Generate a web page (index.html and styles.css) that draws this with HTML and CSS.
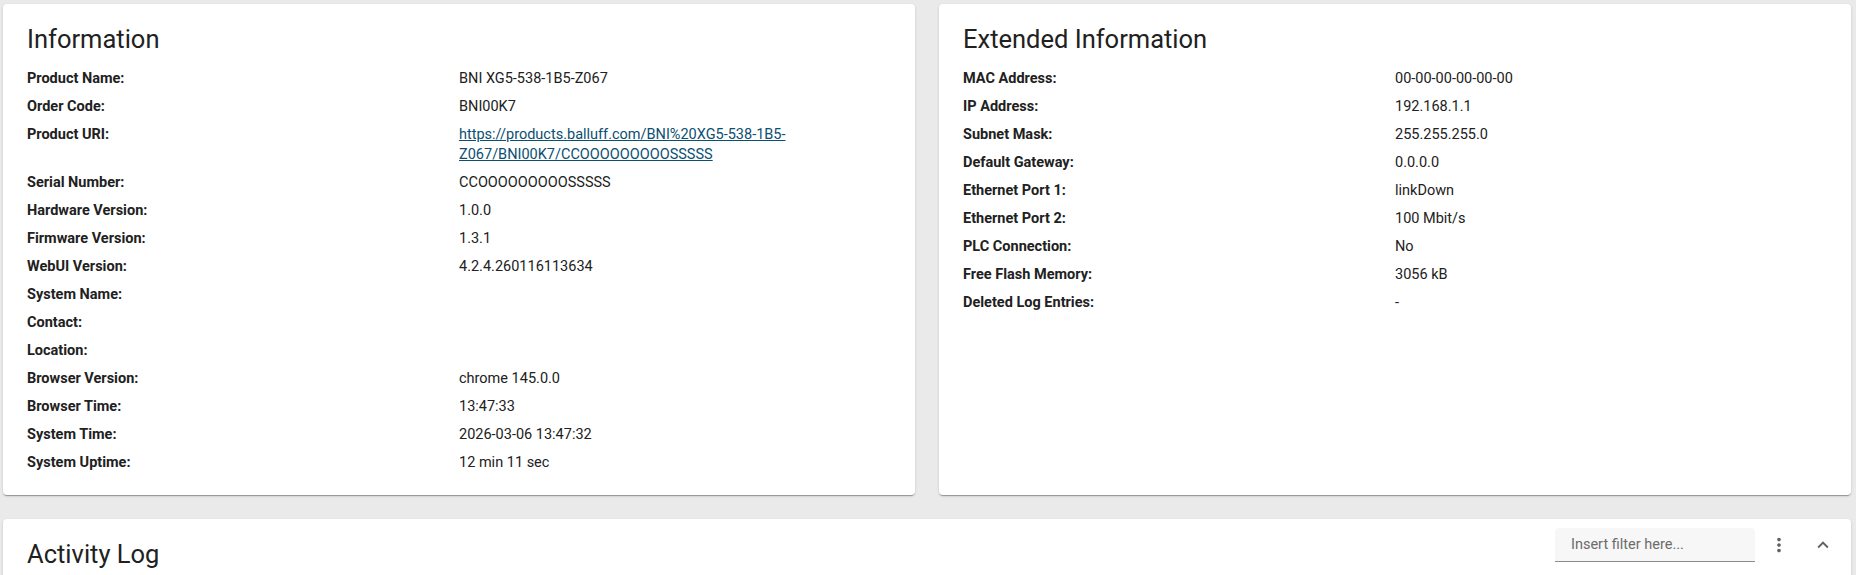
FILE: index.html
```html
<!DOCTYPE html>
<html lang="en">
<head>
    <meta charset="UTF-8">
    <meta name="viewport" content="width=device-width, initial-scale=1.0">
    <title>Device Overview</title>
    <link rel="stylesheet" href="styles.css">
</head>
<body>
    <main class="page">
        <!-- Fila superior: datos del equipo y red -->
        <div class="card-row">
            <section class="card">
                <h2 class="card-title">Information</h2>
                <dl class="info-list">
                    <dt>Product Name:</dt><dd>BNI XG5-538-1B5-Z067</dd>
                    <dt>Order Code:</dt><dd>BNI00K7</dd>
                    <dt>Product URI:</dt>
                    <dd><a href="#">https://products.balluff.com/BNI%20XG5-538-1B5-<br>Z067/BNI00K7/CCOOOOOOOOOSSSSS</a></dd>
                    <dt>Serial Number:</dt><dd>CCOOOOOOOOOSSSSS</dd>
                    <dt>Hardware Version:</dt><dd>1.0.0</dd>
                    <dt>Firmware Version:</dt><dd>1.3.1</dd>
                    <dt>WebUI Version:</dt><dd>4.2.4.260116113634</dd>
                    <dt>System Name:</dt><dd></dd>
                    <dt>Contact:</dt><dd></dd>
                    <dt>Location:</dt><dd></dd>
                    <dt>Browser Version:</dt><dd>chrome 145.0.0</dd>
                    <dt>Browser Time:</dt><dd>13:47:33</dd>
                    <dt>System Time:</dt><dd>2026-03-06 13:47:32</dd>
                    <dt>System Uptime:</dt><dd>12 min 11 sec</dd>
                </dl>
            </section>

            <section class="card">
                <h2 class="card-title">Extended Information</h2>
                <dl class="info-list">
                    <dt>MAC Address:</dt><dd>00-00-00-00-00-00</dd>
                    <dt>IP Address:</dt><dd>192.168.1.1</dd>
                    <dt>Subnet Mask:</dt><dd>255.255.255.0</dd>
                    <dt>Default Gateway:</dt><dd>0.0.0.0</dd>
                    <dt>Ethernet Port 1:</dt><dd>linkDown</dd>
                    <dt>Ethernet Port 2:</dt><dd>100 Mbit/s</dd>
                    <dt>PLC Connection:</dt><dd>No</dd>
                    <dt>Free Flash Memory:</dt><dd>3056 kB</dd>
                    <dt>Deleted Log Entries:</dt><dd>-</dd>
                </dl>
            </section>
        </div>

        <!-- Registro de actividad -->
        <section class="card log-card">
            <div class="card-head">
                <h2 class="card-title">Activity Log</h2>
                <div class="log-tools">
                    <input type="text" class="filter" placeholder="Insert filter here...">
                    <button class="icon-btn" title="More">
                        <svg viewBox="0 0 24 24" width="22" height="22"><path d="M12 8c1.1 0 2-.9 2-2s-.9-2-2-2-2 .9-2 2 .9 2 2 2zm0 2c-1.1 0-2 .9-2 2s.9 2 2 2 2-.9 2-2-.9-2-2-2zm0 6c-1.1 0-2 .9-2 2s.9 2 2 2 2-.9 2-2-.9-2-2-2z"/></svg>
                    </button>
                    <button class="icon-btn" title="Collapse">
                        <svg viewBox="0 0 24 24" width="22" height="22"><path d="M12 8l-6 6 1.41 1.41L12 10.83l4.59 4.58L18 14z"/></svg>
                    </button>
                </div>
            </div>
        </section>
    </main>
</body>
</html>
```

FILE: styles.css
```css
html {
    overflow: hidden;
}
body {
    font-family: Roboto, "Liberation Sans", Arial, sans-serif;
    margin: 0;
    padding: 0;
    background-color: #eaeaea;
    color: #212121;
}
.page {
    padding: 4px 5px 0 3px;
}
.card-row {
    display: grid;
    grid-template-columns: 1fr 1fr;
    gap: 24px;
    margin-bottom: 24px;
}
.card {
    background: white;
    border-radius: 4px;
    padding: 19px 24px 22px;
    box-shadow: 0 2px 1px -1px rgba(0, 0, 0, 0.2), 0 1px 1px 0 rgba(0, 0, 0, 0.14), 0 1px 3px 0 rgba(0, 0, 0, 0.12);
}
.card-title {
    margin: 0 0 14px;
    font-size: 25.5px;
    font-weight: 400;
    line-height: 32px;
    color: #212121;
}
.info-list {
    display: grid;
    grid-template-columns: 1fr 1fr;
    row-gap: 8px;
    margin: 0;
    font-size: 14.5px;
    line-height: 20px;
}
.info-list dt {
    font-weight: 700;
}
.info-list dd {
    margin: 0;
}
.info-list a {
    color: #0b4f71;
}

/* Tarjeta del log */
.log-card {
    padding-top: 9px;
    min-height: 200px;
}
.card-head {
    display: flex;
    align-items: flex-start;
    justify-content: space-between;
}
.log-card .card-title {
    margin-top: 10px;
}
.log-tools {
    display: flex;
    align-items: center;
    margin-right: -8px;
}
.filter {
    width: 200px;
    height: 34px;
    box-sizing: border-box;
    padding: 0 16px;
    border: none;
    border-bottom: 1px solid #8c8c8c;
    border-radius: 4px 4px 0 0;
    background-color: #f7f7f7;
    font-family: inherit;
    font-size: 14.5px;
    color: #212121;
}
.filter::placeholder {
    color: #6b6b6b;
}
.icon-btn {
    width: 24px;
    height: 24px;
    padding: 0;
    margin-left: 12px;
    border: none;
    background: none;
    display: flex;
    align-items: center;
    justify-content: center;
    cursor: pointer;
    fill: #616161;
}
.icon-btn + .icon-btn {
    margin-left: 20px;
}
```
